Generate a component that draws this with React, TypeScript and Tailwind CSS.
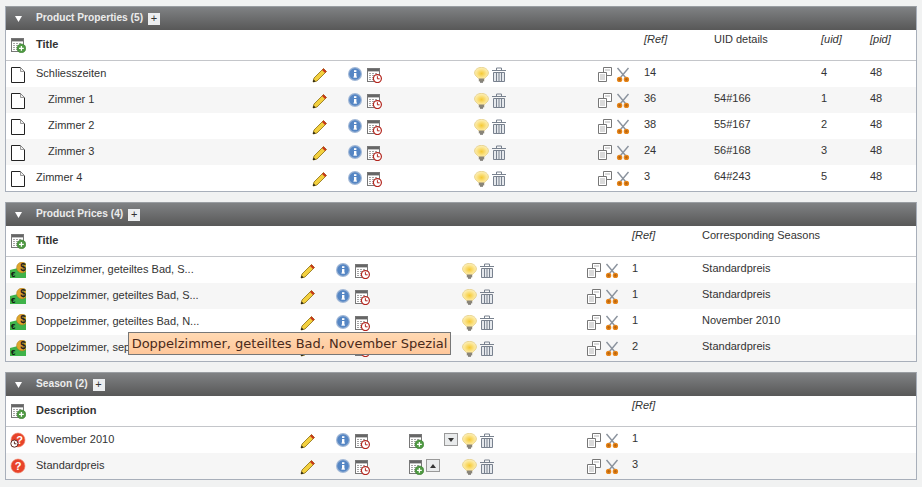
import React from 'react';

const Doc = () => (
  <svg width="16" height="16" viewBox="0 0 16 16">
    <path d="M1.5 .5H10.5L14.5 4.5V15.5H1.5Z" fill="#fff" stroke="#222" />
    <path d="M10.5 .5V4.5H14.5" fill="#eee" stroke="#999" />
  </svg>
);

const Pencil = () => (
  <svg width="16" height="16" viewBox="0 0 16 16">
    <path d="M1 15L2 11L11.5 1.5L14.5 4.5L5 14Z" fill="#f3d03e" stroke="#8a6d10" strokeWidth=".8" />
    <path d="M11.5 1.5L14.5 4.5L13 6L10 3Z" fill="#c8341c" />
    <path d="M1 15L1.6 12.4L3.6 14.4Z" fill="#111" />
  </svg>
);

const Info = () => (
  <svg width="16" height="16" viewBox="0 0 16 16">
    <circle cx="7" cy="7" r="7" fill="#9fb6d6" />
    <circle cx="7" cy="7" r="5.8" fill="#5586c4" />
    <rect x="6" y="6" width="2.4" height="4.2" fill="#fff" />
    <rect x="5.4" y="9.6" width="3.6" height="1" fill="#fff" />
    <rect x="6" y="3.2" width="2.4" height="1.8" fill="#fff" />
  </svg>
);

const TableBase = () => (
  <>
    <rect x="1.5" y="1.5" width="12" height="13" fill="#fff" stroke="#777" />
    <rect x="2" y="2" width="11" height="2.4" fill="#666" />
    <path d="M3 6.5H12M3 8.5H12M3 10.5H12M3 12.5H12" stroke="#a5a5a5" strokeDasharray="2 1" />
  </>
);

const History = () => (
  <svg width="16" height="16" viewBox="0 0 16 16">
    <TableBase />
    <circle cx="11.4" cy="11.6" r="4" fill="#fff" stroke="#b3261e" strokeWidth="1.2" />
    <path d="M11.4 9.2V11.8H13.6" fill="none" stroke="#b3261e" />
  </svg>
);

const NewRecord = () => (
  <svg width="16" height="16" viewBox="0 0 16 16">
    <TableBase />
    <circle cx="11.4" cy="11.4" r="4.4" fill="#4f9a42" stroke="#3a7a30" strokeWidth=".6" />
    <path d="M11.4 9V13.8M9 11.4H13.8" stroke="#fff" strokeWidth="1.3" />
  </svg>
);

const Bulb = () => (
  <svg width="16" height="16" viewBox="0 0 16 16">
    <defs>
      <radialGradient id="bulbFill" cx="50%" cy="55%" r="60%">
        <stop offset="0%" stopColor="#f5c934" />
        <stop offset="55%" stopColor="#fbe38a" />
        <stop offset="100%" stopColor="#fdf4cc" />
      </radialGradient>
    </defs>
    <path d="M7.5 .4C3.6 .4 .6 2.8 .6 6C.6 8.6 3.4 10 4.6 11.6H10.4C11.6 10 14.4 8.6 14.4 6C14.4 2.8 11.4 .4 7.5 .4Z" fill="url(#bulbFill)" stroke="#e3cb7c" strokeWidth=".8" />
    <rect x="4.8" y="11.6" width="5.4" height="2.8" fill="#8a8578" />
    <rect x="6" y="14.4" width="3" height="1.2" fill="#55514a" />
  </svg>
);

const Trash = () => (
  <svg width="16" height="16" viewBox="0 0 16 16">
    <path d="M0 3.5H14" stroke="#78818e" />
    <path d="M4.5 3V1H9.5V3" fill="none" stroke="#78818e" />
    <path d="M1.5 5.5H12.5V14.5H1.5Z" fill="#e6e9ed" stroke="#78818e" />
    <path d="M4.5 6V14M7 6V14M9.5 6V14" stroke="#78818e" />
  </svg>
);

const Copy = () => (
  <svg width="16" height="16" viewBox="0 0 16 16">
    <path d="M6.5 .5H14.5V8.5H6.5Z" fill="#fff" stroke="#777" />
    <path d="M1.5 5.5H9.5V14.5H1.5Z" fill="#fff" stroke="#777" />
    <path d="M8 3H13M3 8H8M3 10H8M3 12H8" stroke="#b5b5b5" />
  </svg>
);

const Cut = () => (
  <svg width="16" height="16" viewBox="0 0 16 16">
    <path d="M2.5 1L10.5 10.5M13.5 1L5.5 10.5" stroke="#8a929d" strokeWidth="1.4" />
    <circle cx="4.6" cy="12.4" r="2" fill="#b8650f" stroke="#e8861a" strokeWidth="1.4" />
    <circle cx="11.4" cy="12.4" r="2" fill="#b8650f" stroke="#e8861a" strokeWidth="1.4" />
  </svg>
);

const Price = () => (
  <svg width="16" height="16" viewBox="0 0 16 16">
    <path d="M0 8L8 6H16V16H0Z" fill="#3fb34a" />
    <circle cx="12" cy="5.5" r="5.4" fill="#dfa62c" stroke="#a8781a" strokeWidth=".5" />
    <text x="13" y="9" textAnchor="middle" fontSize="10" fontWeight="700" fill="#222" fontFamily="Liberation Sans">$</text>
    <text x="1" y="14.5" fontSize="8" fontWeight="700" fill="#111" fontFamily="Liberation Sans">€</text>
  </svg>
);

const Warn = ({ clock }: { clock?: boolean }) => (
  <svg width="16" height="16" viewBox="0 0 16 16">
    <circle cx="8" cy="8" r="7" fill="#e8432a" stroke="#f08a70" strokeWidth=".6" />
    <text x={clock ? 9.5 : 8} y="12" textAnchor="middle" fontSize="11" fontWeight="700" fill="#fff" fontFamily="Liberation Sans">?</text>
    {clock && (
      <>
        <circle cx="4.4" cy="11.6" r="3.6" fill="#fff" stroke="#5a2a22" />
        <path d="M4.4 9.6V11.8H6.4" fill="none" stroke="#5a2a22" />
      </>
    )}
  </svg>
);

const Arrow = ({ up }: { up?: boolean }) => (
  <div className="flex h-[13px] w-[14px] items-center justify-center border border-[#999] bg-[#e9ebec]">
    <svg width="6" height="4" viewBox="0 0 6 4">
      <path d={up ? 'M3 0L6 4H0Z' : 'M3 4L6 0H0Z'} fill="#333" />
    </svg>
  </div>
);

const cols1 = 'grid-cols-[30px_276px_36px_126px_123px_47px_70px_107px_49px_1fr]';
const cols2 = 'grid-cols-[30px_264px_36px_72px_54px_124px_46px_70px_1fr]';

const Panel = ({ title, count, children }: { title: string; count: number; children: React.ReactNode }) => (
  <div className="mx-[5px] border border-t-[#9a9ea2] border-x-[#a8afba] border-b-[#a8afba] bg-white">
    <div className="flex h-[23px] items-center bg-gradient-to-b from-[#808284] to-[#585858]">
      <div className="w-[30px] pl-[9px]">
        <svg width="7" height="6" viewBox="0 0 7 6" className="block">
          <path d="M0 0H7L3.5 6Z" fill="#fff" />
        </svg>
      </div>
      <span className="pb-[2px] text-[10.2px] font-bold text-[#ececec]">{title} ({count})</span>
      <span className="ml-[5px] flex h-[12px] w-[12px] items-center justify-center bg-[#eceef0] text-[11px] leading-none text-[#333]">+</span>
    </div>
    {children}
  </div>
);

const Ico = ({ children }: { children: React.ReactNode }) => <div className="flex gap-[2px] pt-[6px]">{children}</div>;
const Txt = ({ children }: { children?: React.ReactNode }) => <div className="pt-[3px]">{children}</div>;

const propRows = [
  { title: 'Schliesszeiten', indent: false, ref: '14', details: '', uid: '4' },
  { title: 'Zimmer 1', indent: true, ref: '36', details: '54#166', uid: '1' },
  { title: 'Zimmer 2', indent: true, ref: '38', details: '55#167', uid: '2' },
  { title: 'Zimmer 3', indent: true, ref: '24', details: '56#168', uid: '3' },
  { title: 'Zimmer 4', indent: false, ref: '3', details: '64#243', uid: '5' },
];

const priceRows = [
  { title: 'Einzelzimmer, geteiltes Bad, S...', ref: '1', season: 'Standardpreis' },
  { title: 'Doppelzimmer, geteiltes Bad, S...', ref: '1', season: 'Standardpreis' },
  { title: 'Doppelzimmer, geteiltes Bad, N...', ref: '1', season: 'November 2010' },
  { title: 'Doppelzimmer, separates Bad, S...', ref: '2', season: 'Standardpreis' },
];

export default function App() {
  return (
    <div className="relative flex h-[487px] flex-col gap-[10px] overflow-hidden bg-[#f1f2f2] pt-[6px] font-['Liberation_Sans',Arial,sans-serif] text-[11px] leading-[16px] text-[#333]">
      <Panel title="Product Properties" count={5}>
        <div className={`grid h-[31px] border-b border-[#c4c6ca] ${cols1}`}>
          <div className="pt-[7px] pl-[4px]"><NewRecord /></div>
          <div className="col-span-5 pt-[6px] font-bold">Title</div>
          <div className="pt-[1px] italic">[Ref]</div>
          <div className="pt-[1px]">UID details</div>
          <div className="pt-[1px] italic">[uid]</div>
          <div className="pt-[1px] italic">[pid]</div>
        </div>
        {propRows.map((r, i) => (
          <div key={r.title} className={`grid h-[26px] ${cols1} ${i % 2 ? 'bg-[#f6f6f6]' : 'bg-white'}`}>
            <div className="pt-[6px] pl-[4px]"><Doc /></div>
            <div className={`pt-[4px] ${r.indent ? 'pl-[12px]' : ''}`}>{r.title}</div>
            <Ico><Pencil /></Ico>
            <Ico><Info /><History /></Ico>
            <Ico><Bulb /><Trash /></Ico>
            <Ico><Copy /><Cut /></Ico>
            <Txt>{r.ref}</Txt>
            <Txt>{r.details}</Txt>
            <Txt>{r.uid}</Txt>
            <Txt>48</Txt>
          </div>
        ))}
      </Panel>

      <Panel title="Product Prices" count={4}>
        <div className={`grid h-[31px] border-b border-[#c4c6ca] ${cols2}`}>
          <div className="pt-[7px] pl-[4px]"><NewRecord /></div>
          <div className="col-span-6 pt-[6px] font-bold">Title</div>
          <div className="pt-[1px] italic">[Ref]</div>
          <div className="pt-[1px]">Corresponding Seasons</div>
        </div>
        {priceRows.map((r, i) => (
          <div key={i} className={`grid h-[26px] ${cols2} ${i % 2 ? 'bg-[#f6f6f6]' : 'bg-white'}`}>
            <div className="pt-[5px] pl-[4px]"><Price /></div>
            <div className="pt-[4px]">{r.title}</div>
            <Ico><Pencil /></Ico>
            <Ico><Info /><History /></Ico>
            <div />
            <Ico><Bulb /><Trash /></Ico>
            <Ico><Copy /><Cut /></Ico>
            <Txt>{r.ref}</Txt>
            <Txt>{r.season}</Txt>
          </div>
        ))}
      </Panel>

      <Panel title="Season" count={2}>
        <div className={`grid h-[31px] border-b border-[#c4c6ca] ${cols2}`}>
          <div className="pt-[7px] pl-[4px]"><NewRecord /></div>
          <div className="col-span-6 pt-[6px] font-bold">Description</div>
          <div className="pt-[1px] italic">[Ref]</div>
        </div>
        <div className={`grid h-[26px] bg-white ${cols2}`}>
          <div className="pt-[5px] pl-[4px]"><Warn clock /></div>
          <div className="pt-[4px]">November 2010</div>
          <Ico><Pencil /></Ico>
          <Ico><Info /><History /></Ico>
          <Ico><NewRecord /><div className="ml-[18px]"><Arrow /></div></Ico>
          <Ico><Bulb /><Trash /></Ico>
          <Ico><Copy /><Cut /></Ico>
          <Txt>1</Txt>
          <div />
        </div>
        <div className={`grid h-[26px] bg-[#f6f6f6] ${cols2}`}>
          <div className="pt-[5px] pl-[4px]"><Warn /></div>
          <div className="pt-[4px]">Standardpreis</div>
          <Ico><Pencil /></Ico>
          <Ico><Info /><History /></Ico>
          <Ico><NewRecord /><Arrow up /></Ico>
          <Ico><Bulb /><Trash /></Ico>
          <Ico><Copy /><Cut /></Ico>
          <Txt>3</Txt>
          <div />
        </div>
      </Panel>

      <div className="absolute top-[332px] left-[128px] h-[23px] w-[323px] border border-[#777] bg-gradient-to-b from-[#ffd9b3] to-[#ffc79a] text-center font-['DejaVu_Sans',sans-serif] text-[13px] leading-[21px] whitespace-nowrap text-[#4a2a1a]">
        Doppelzimmer, geteiltes Bad, November Spezial
      </div>
    </div>
  );
}
